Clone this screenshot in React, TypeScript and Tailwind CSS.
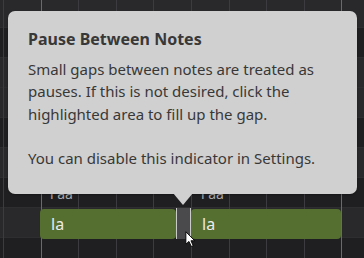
const beats = Array.from({ length: 10 }, (_, i) => i);

// rows of the piano roll, top to bottom (true = black key)
const rows = [false, true, false, false, true, false, true, false, true];

function Cursor() {
  return (
    <svg width="11" height="17" viewBox="0 0 14 22" className="absolute left-[185px] top-[231px]">
      <path
        d="M1 1 L1 17 L5 13.5 L8 20 L10.5 19 L7.6 12.6 L12.5 12.6 Z"
        fill="#ffffff"
        stroke="#000000"
        strokeWidth="1.2"
        strokeLinejoin="round"
      />
    </svg>
  );
}

function Note({ width }: { width: string }) {
  return (
    <div className={"h-[30px] rounded-[4px] bg-[#546f2f] flex items-center pl-[11px] text-[16px] text-[#ececec] " + width}>
      la
    </div>
  );
}

export default function App() {
  return (
    <div
      className="relative w-[364px] h-[258px] overflow-hidden bg-[#202023]"
      style={{ fontFamily: '"Noto Sans", "Open Sans", sans-serif' }}
    >
      {/* Rows */}
      <div className="absolute inset-x-0 top-[-2px] flex flex-col">
        {rows.map((black, i) => (
          <div
            key={i}
            className={
              "h-[30px] border-b border-[#2e2e31] " + (black ? "bg-[#1f1f22]" : "bg-[#29292c]")
            }
          />
        ))}
      </div>

      {/* Beat lines */}
      <div className="absolute inset-y-0 left-[3px] flex">
        {beats.map((b) => (
          <div
            key={b}
            className={
              "w-[37.6px] h-full border-l " +
              (b === 1 || b === 9 ? "border-[#6a6a6d]" : "border-[#3c3c40]")
            }
          />
        ))}
      </div>

      {/* Notes with phonemes */}
      <div className="absolute left-[40px] top-[183px] flex flex-col">
        <div className="flex h-[25px] text-[14px] text-[#a9a9ab]">
          <span className="w-[151px] pl-[10px]">l aa</span>
          <span className="pl-[10px]">l aa</span>
        </div>
        <div className="flex items-end">
          <Note width="w-[136px]" />
          <div className="w-[15px] h-[31px] bg-[#4a4a4d] border-x border-[#c9c9c9]" />
          <Note width="w-[150px]" />
        </div>
      </div>

      {/* Tooltip */}
      <div className="absolute left-[8px] top-[11px] w-[349px] h-[183px] rounded-[7px] bg-[#d0d0d0] px-[20px] pt-[17px] text-[#383838] shadow-[0_1px_2px_rgba(0,0,0,0.3)]">
        <div className="text-[16px] font-bold leading-[22px]">Pause Between Notes</div>
        <div className="mt-[8px] text-[15px] leading-[22.3px]">
          <p>
            Small gaps between notes are treated as pauses. If this is not desired, click the
            highlighted area to fill up the gap.
          </p>
          <p className="mt-[22.3px]">You can disable this indicator in Settings.</p>
        </div>
        <div className="absolute left-[165px] top-[182px] w-0 h-0 border-x-[10px] border-x-transparent border-t-[12px] border-t-[#d0d0d0]" />
      </div>

      <Cursor />
    </div>
  );
}
